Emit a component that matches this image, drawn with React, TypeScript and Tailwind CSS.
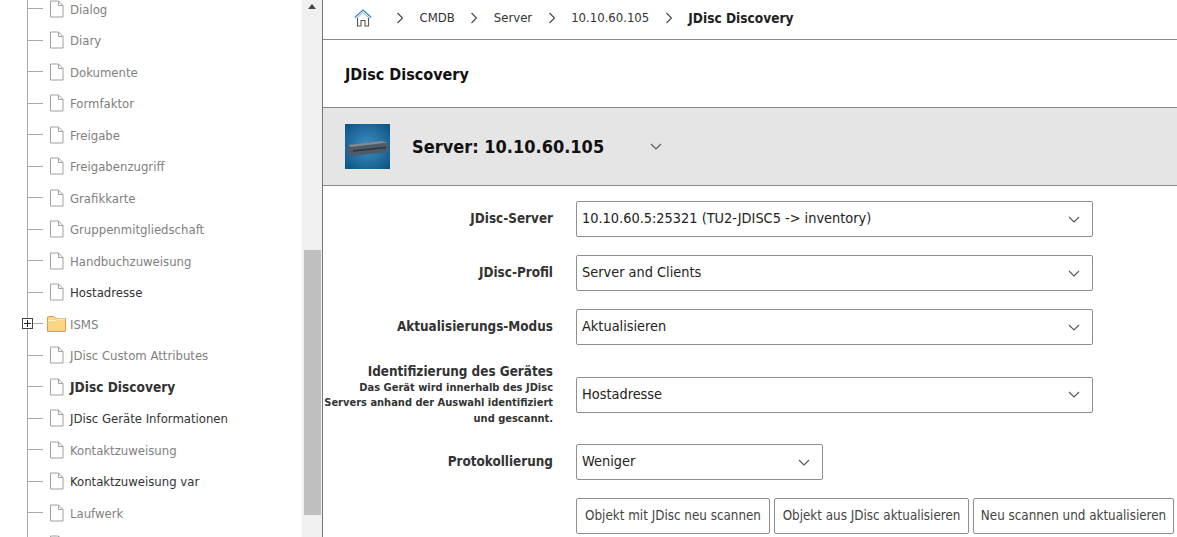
import React from "react";

const items = [
  { name: "Dialog" },
  { name: "Diary" },
  { name: "Dokumente" },
  { name: "Formfaktor" },
  { name: "Freigabe" },
  { name: "Freigabenzugriff" },
  { name: "Grafikkarte" },
  { name: "Gruppenmitgliedschaft" },
  { name: "Handbuchzuweisung" },
  { name: "Hostadresse", dark: true },
  { name: "ISMS", folder: true },
  { name: "JDisc Custom Attributes" },
  { name: "JDisc Discovery", active: true },
  { name: "JDisc Geräte Informationen", dark: true },
  { name: "Kontaktzuweisung" },
  { name: "Kontaktzuweisung var", dark: true },
  { name: "Laufwerk" },
  { name: "" },
];

const DocIcon = () => (
  <svg width="15" height="18" viewBox="0 0 15 18" fill="none" className="shrink-0">
    <path d="M1.5 1H9.5L14 5.5V17H1.5Z M9.5 1V5.5H14" fill="#fff" stroke="#a0a0a0" strokeWidth="1" />
  </svg>
);

const FolderIcon = () => (
  <svg width="19" height="16" viewBox="0 0 19 16" className="shrink-0">
    <path d="M.5 3V1.5Q.5.5 1.5.5H7L9 2.5H18.5V15.5H.5Z" fill="#fbd583" stroke="#e59a4c" />
    <path d="M1 4.5H9L10 3H18" fill="none" stroke="#fff3d0" />
  </svg>
);

const Chevron = ({ className = "" }: { className?: string }) => (
  <svg width="12" height="7" viewBox="0 0 12 7" fill="none" className={className}>
    <path d="M1 1L6 6L11 1" stroke="#555" strokeWidth="1.1" />
  </svg>
);

const Crumb = () => (
  <svg width="6" height="12" viewBox="0 0 6 12" fill="none" className="shrink-0">
    <path d="M.5 1L5.5 6L.5 11" stroke="#444" strokeWidth="1.1" />
  </svg>
);

const HomeIcon = () => (
  <svg width="18" height="18" viewBox="0 0 18 18" fill="none">
    <path d="M.8 8.5L9 1L17.2 8.5" stroke="#2f7fc0" strokeWidth="1.1" />
    <path d="M2.5 9.5L9 3.5L15.5 9.5" stroke="#7fb2d8" strokeWidth="1" />
    <path d="M3.5 9V17H7V11.5H11V17H14.5V9" stroke="#555" strokeWidth="1.1" />
  </svg>
);

const ServerPicture = () => (
  <svg width="45" height="45" viewBox="0 0 45 45" className="shrink-0">
    <defs>
      <radialGradient id="srv" cx="50%" cy="50%" r="65%">
        <stop offset="0%" stopColor="#3f8fc4" />
        <stop offset="100%" stopColor="#0f5687" />
      </radialGradient>
    </defs>
    <rect width="45" height="45" fill="url(#srv)" />
    <path d="M3 21L36 17L43 18.5V28L6 32L3 30.5Z" fill="#4d5a67" />
    <path d="M3 21L36 17L43 18.5L6 23Z" fill="#7f8c98" />
    <path d="M8 27L41 23.5" stroke="#2a343c" strokeWidth="1.5" />
  </svg>
);

const Select = ({ value, small }: { value: string; small?: boolean }) => (
  <div
    className={`flex h-[36px] items-center justify-between rounded-[2px] border border-[#8f8f8f] bg-white pl-[5px] pr-[12px] ${
      small ? "w-[247px]" : "w-[517px]"
    }`}
  >
    <span className="text-[14.4px] text-[#222]">{value}</span>
    <Chevron />
  </div>
);

const Row = ({ label, value, small, className = "" }: { label: string; value: string; small?: boolean; className?: string }) => (
  <div className={`flex items-center ${className}`}>
    <label className="w-[230px] whitespace-nowrap text-right text-[13.4px] font-bold text-[#333]">{label}</label>
    <div className="ml-[23px]">
      <Select value={value} small={small} />
    </div>
  </div>
);

const Button = ({ label, width }: { label: string; width: string }) => (
  <button className={`h-[36px] whitespace-nowrap rounded-[2px] border border-[#8f8f8f] bg-white text-[13.3px] text-[#444] ${width}`}>
    {label}
  </button>
);

export default function App() {
  return (
    <div className="flex h-[537px] w-[1177px] overflow-hidden bg-white font-['DejaVu_Sans',sans-serif] text-[14px] font-stretch-condensed">
      <aside className="flex h-full w-[323px] shrink-0 border-r border-[#777]">
        <div className="relative -mt-[7px] h-[600px] w-[302px]">
          <div className="absolute bottom-0 left-[27px] top-0 w-px bg-[#aaa]" />
          {items.map((item) => (
            <div key={item.name || "cut"} className="relative flex h-[31.5px] items-center">
              <div className="ml-[28px] h-px w-[15px] bg-[#aaa]" />
              {item.folder && (
                <div className="absolute left-[22px] top-[10px] flex h-[11px] w-[11px] items-center justify-center border border-[#444] bg-white">
                  <div className="absolute h-px w-[7px] bg-[#222]" />
                  <div className="absolute h-[7px] w-px bg-[#222]" />
                </div>
              )}
              <div className={`flex w-[27px] ${item.folder ? "pl-[4px]" : "pl-[6px]"}`}>
                {item.folder ? <FolderIcon /> : <DocIcon />}
              </div>
              <span
                className={`whitespace-nowrap pt-[1px] ${
                  item.active
                    ? "text-[13.6px] font-bold text-[#333]"
                    : item.dark
                      ? "text-[13px] text-[#333]"
                      : "text-[13px] text-[#808080]"
                }`}
              >
                {item.name}
              </span>
            </div>
          ))}
        </div>
        <div className="flex w-[20px] flex-col items-center bg-[#f0f0f0]">
          <div className="mt-[4px] h-0 w-0 border-x-[4.5px] border-b-[5px] border-x-transparent border-b-[#444]" />
          <div className="mt-[241px] h-[265px] w-[17px] bg-[#bfbfbf]" />
        </div>
      </aside>

      <main className="min-w-0 flex-1">
        <nav className="flex h-[40px] items-center border-b border-[#8a8a8a] pb-[3px] pl-[31px] text-[13px] text-[#333]">
          <HomeIcon />
          <div className="ml-[25px] flex items-center gap-[16.5px]">
            <Crumb />
            <span>CMDB</span>
            <Crumb />
            <span>Server</span>
            <Crumb />
            <span>10.10.60.105</span>
            <Crumb />
            <span className="text-[13.6px] font-bold text-[#222]">JDisc Discovery</span>
          </div>
        </nav>
        <h1 className="flex h-[68px] items-center border-b border-[#8a8a8a] pl-[22px] pt-[2px] text-[16px] font-bold text-[#111]">
          JDisc Discovery
        </h1>
        <div className="flex h-[78px] items-center border-b border-[#8a8a8a] bg-[#e5e5e5] pl-[22px]">
          <ServerPicture />
          <span className="ml-[22px] text-[18px] font-bold text-[#111]">Server: 10.10.60.105</span>
          <Chevron className="ml-[46px]" />
        </div>
        <form className="pt-[15px]">
          <Row label="JDisc-Server" value="10.10.60.5:25321 (TU2-JDISC5 -> inventory)" />
          <Row label="JDisc-Profil" value="Server and Clients" className="mt-[18px]" />
          <Row label="Aktualisierungs-Modus" value="Aktualisieren" className="mt-[18px]" />
          <div className="mt-[18px] flex h-[63px] items-center">
            <div className="w-[230px] whitespace-nowrap text-right font-bold text-[#333]">
              <div className="text-[13.4px] leading-[17px]">Identifizierung des Gerätes</div>
              <div className="text-[11px] leading-[15.5px]">
                <div>Das Gerät wird innerhalb des JDisc</div>
                <div>Servers anhand der Auswahl identifiziert</div>
                <div>und gescannt.</div>
              </div>
            </div>
            <div className="ml-[23px]">
              <Select value="Hostadresse" />
            </div>
          </div>
          <Row label="Protokollierung" value="Weniger" small className="mt-[18px]" />
          <div className="ml-[253px] mt-[18px] flex gap-[4px]">
            <Button label="Objekt mit JDisc neu scannen" width="w-[194px]" />
            <Button label="Objekt aus JDisc aktualisieren" width="w-[195px]" />
            <Button label="Neu scannen und aktualisieren" width="w-[201px]" />
          </div>
        </form>
      </main>
    </div>
  );
}
